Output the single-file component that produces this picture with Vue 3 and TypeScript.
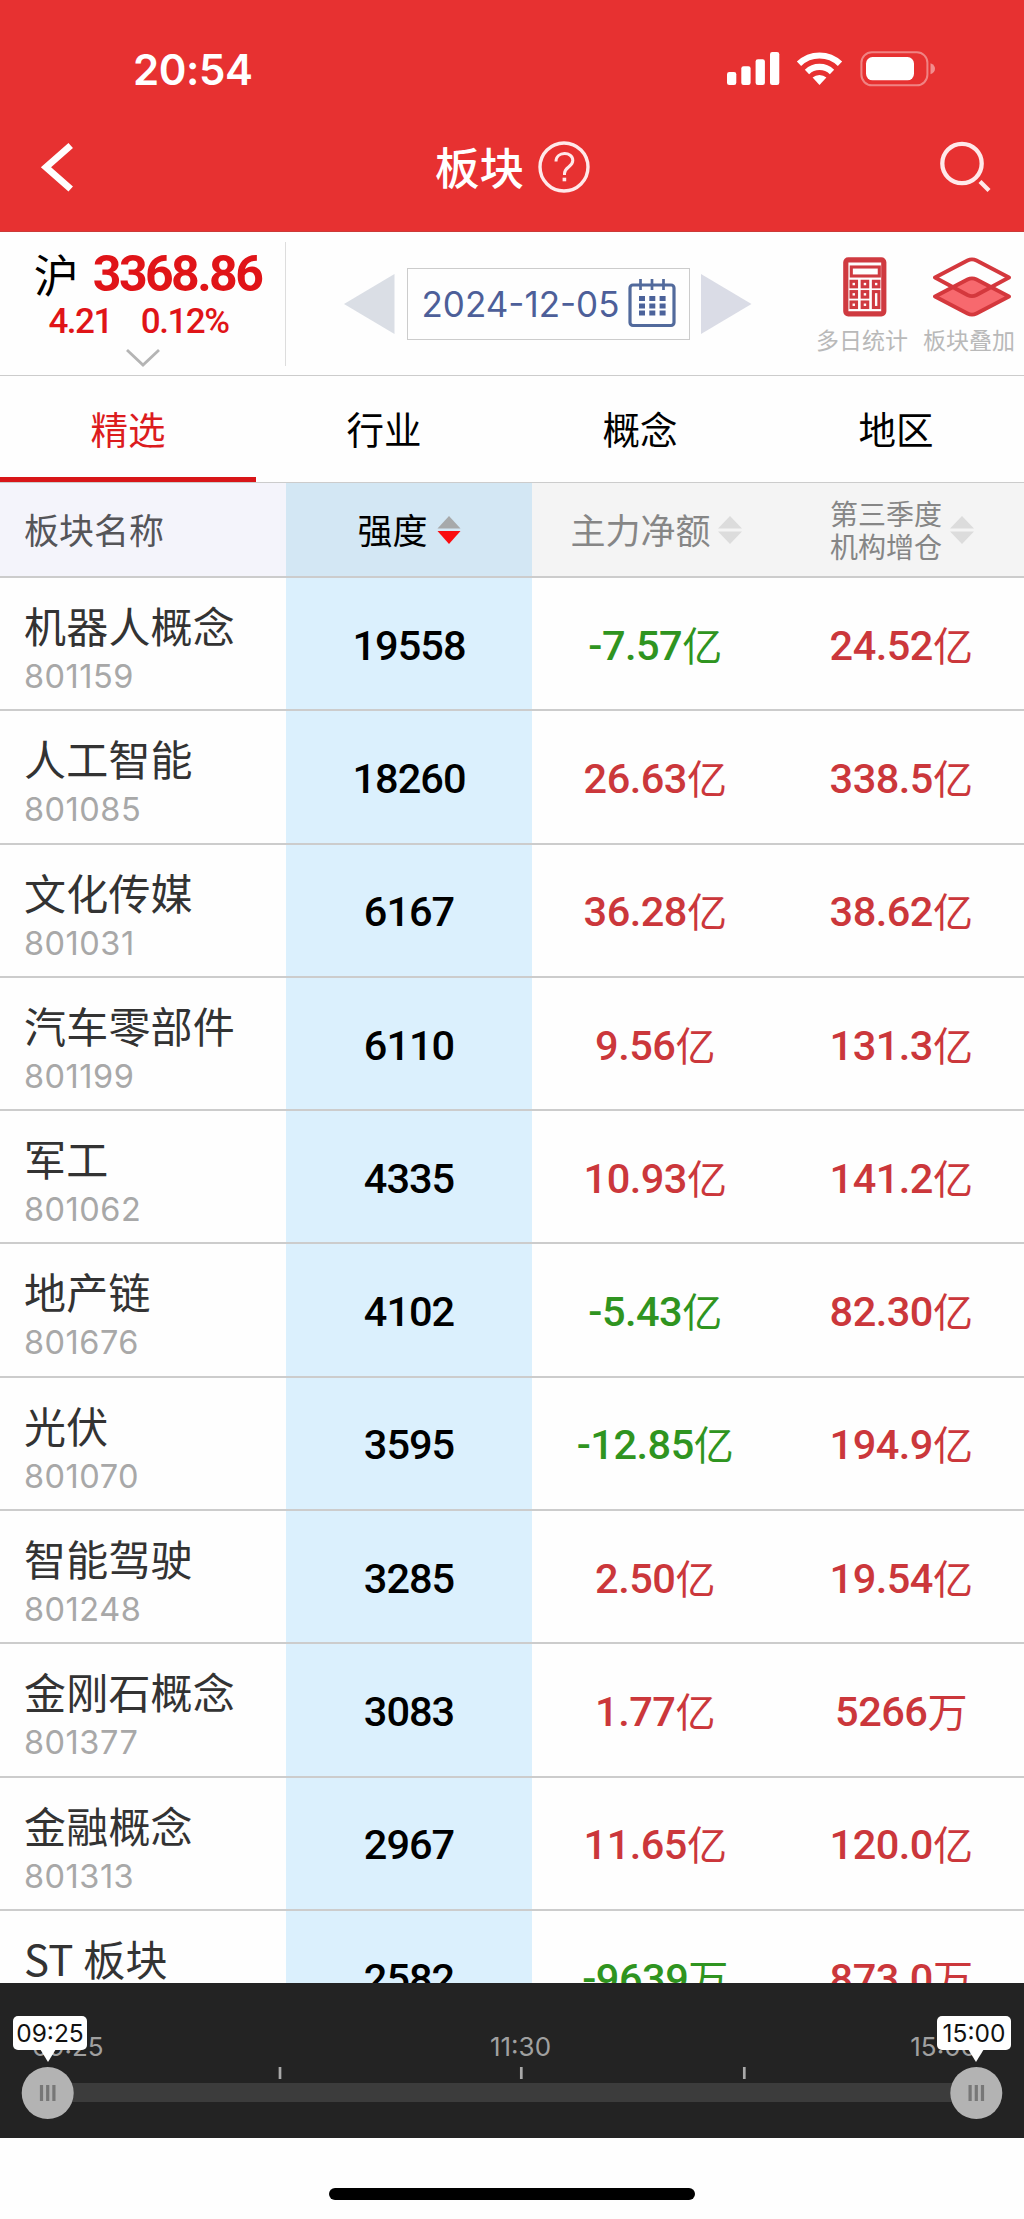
<script setup lang="ts">
interface Sector {
  name: string
  code: string
  strength: number
  net: string
  added: string
}

const tabs: string[] = ['精选', '行业', '概念', '地区']

const sectors: Sector[] = [
  { name: '机器人概念', code: '801159', strength: 19558, net: '-7.57亿', added: '24.52亿' },
  { name: '人工智能', code: '801085', strength: 18260, net: '26.63亿', added: '338.5亿' },
  { name: '文化传媒', code: '801031', strength: 6167, net: '36.28亿', added: '38.62亿' },
  { name: '汽车零部件', code: '801199', strength: 6110, net: '9.56亿', added: '131.3亿' },
  { name: '军工', code: '801062', strength: 4335, net: '10.93亿', added: '141.2亿' },
  { name: '地产链', code: '801676', strength: 4102, net: '-5.43亿', added: '82.30亿' },
  { name: '光伏', code: '801070', strength: 3595, net: '-12.85亿', added: '194.9亿' },
  { name: '智能驾驶', code: '801248', strength: 3285, net: '2.50亿', added: '19.54亿' },
  { name: '金刚石概念', code: '801377', strength: 3083, net: '1.77亿', added: '5266万' },
  { name: '金融概念', code: '801313', strength: 2967, net: '11.65亿', added: '120.0亿' },
  { name: 'ST 板块', code: '', strength: 2582, net: '-9639万', added: '873.0万' },
]

const amount = (v: string): string => v.slice(0, -1)
const unit = (v: string): string => v.slice(-1)
const tone = (v: string): string => (v.startsWith('-') ? 'down' : 'up')
</script>

<template>
  <div class="screen">
    <header class="top">
      <div class="status">
        <span class="clock">20:54</span>
        <svg class="status-icons" width="210" height="38" viewBox="726 50 210 38">
          <g fill="#fff">
            <rect x="727" y="72" width="9.3" height="13" rx="2.3" />
            <rect x="741.3" y="66.3" width="9.3" height="18.7" rx="2.3" />
            <rect x="755.6" y="59.3" width="9.3" height="25.7" rx="2.3" />
            <rect x="770" y="52" width="9.3" height="33" rx="2.3" />
            <path d="M819.5 85 L812.6 77.6 A10.3 10.3 0 0 1 826.4 77.6 Z" />
          </g>
          <g fill="none" stroke="#fff" stroke-width="6.2">
            <path d="M799 63.8 A29.5 29.5 0 0 1 840 63.8" />
            <path d="M807 72 A18 18 0 0 1 832 72" />
          </g>
          <rect x="861.4" y="52.3" width="66" height="33" rx="10.5" fill="none" stroke="#fff" stroke-opacity=".4" stroke-width="2" />
          <rect x="866" y="57" width="48" height="23.3" rx="6.5" fill="#fff" />
          <path d="M930.5 63.2 Q935 65 935 68.7 Q935 72.5 930.5 74.3 Z" fill="#fff" fill-opacity=".45" />
        </svg>
      </div>
      <nav class="nav">
        <svg class="back" width="36" height="54" viewBox="37 140 36 54">
          <path d="M69.7 145.5 L45 167.200 L69.700 189" fill="none" stroke="#fff" stroke-width="6.800" />
        </svg>
        <div class="title">
          <span>板块</span>
          <svg width="54" height="54" viewBox="0 0 54 54" fill="none" stroke="#ffe9ea">
            <circle cx="27" cy="27" r="24" stroke-width="3.400" />
            <path d="M19 21.500 C19 11 35.800 11 35.800 20.500 C35.800 27 27.500 27 27.500 33.500 V35" stroke-width="3" />
            <path d="M25.600 39.500 h3.600" stroke-width="3.600" />
          </svg>
        </div>
        <svg class="search" width="54" height="54" viewBox="936 140 54 54" fill="none" stroke="#ffe9ea" stroke-width="4.300">
          <circle cx="961" cy="163.500" r="19.700" />
          <path d="M979 181.500 L988 190.500" />
        </svg>
      </nav>
    </header>

    <section class="overview">
      <div class="index">
        <div class="index-main"><span class="market">沪</span><b>3368.86</b></div>
        <div class="index-sub"><span>4.21</span><span>0.12%</span></div>
        <svg width="36" height="20" viewBox="0 0 36 20">
          <path d="M2 2 L18 17 L34 2" fill="none" stroke="#b4b4b4" stroke-width="2.800" />
        </svg>
      </div>
      <div class="picker">
        <svg width="51" height="60" viewBox="0 0 51 60"><path d="M0 30 L50.500 0 V60 Z" fill="#dadee5" /></svg>
        <div class="date">
          <span>2024-12-05</span>
          <svg width="48" height="50" viewBox="0 0 48 50">
            <rect x="2" y="7" width="44" height="40.500" rx="3" fill="none" stroke="#526a9c" stroke-width="3.200" />
            <path d="M12.500 1 V12 M24 1 V12 M35.500 1 V12" stroke="#526a9c" stroke-width="2.700" />
            <path d="M11 20.500 h6 m4.300 0 h6 m4.300 0 h6 M11 28 h6 m4.300 0 h6 m4.300 0 h6 M11 35 h6 m4.300 0 h6 m4.300 0 h6" stroke="#4b629a" stroke-width="4.800" />
          </svg>
        </div>
        <svg width="51" height="60" viewBox="0 0 51 60"><path d="M50.500 30 L0 0 V60 Z" fill="#dadce6" /></svg>
      </div>
      <div class="tools">
        <div class="tool">
          <svg width="44" height="60" viewBox="0 0 44 60" fill="none" stroke="#cf3a40">
            <rect x="2.800" y="2.800" width="38" height="54" rx="2.500" stroke-width="5.200" />
            <g stroke-width="3.100">
              <rect x="8.300" y="10" width="28" height="9" />
              <rect x="8" y="24.300" width="5.500" height="5.500" /><rect x="19.200" y="24.300" width="5.500" height="5.500" /><rect x="30.400" y="24.300" width="5.500" height="5.500" />
              <rect x="8" y="34.600" width="5.500" height="5.500" /><rect x="19.200" y="34.600" width="5.500" height="5.500" />
              <rect x="8" y="45" width="5.500" height="5.500" /><rect x="19.200" y="45" width="5.500" height="5.500" />
              <rect x="30.400" y="34.600" width="5.500" height="15.900" />
            </g>
          </svg>
          <span>多日统计</span>
        </div>
        <div class="tool layers">
          <svg width="80" height="60" viewBox="0 0 80 60" stroke="#d4383d" stroke-width="3.900" stroke-linejoin="round">
            <path d="M3 39.500 L35.500 22.500 Q40 20.200 44.500 22.500 L77 39.500 L44.500 56.500 Q40 58.800 35.500 56.500 Z" fill="#f7696e" />
            <path d="M3 20.500 L35.500 3.500 Q40 1.200 44.500 3.500 L77 20.500 L44.500 38 Q40 40.200 35.500 38 Z" fill="none" />
          </svg>
          <span>板块叠加</span>
        </div>
      </div>
    </section>

    <div class="tabs">
      <div v-for="(t, i) in tabs" :key="t" class="tab" :class="{ active: i === 0 }">{{ t }}</div>
    </div>

    <main class="table">
      <div class="row head">
        <div class="cell name-head"><span>板块名称</span></div>
        <div class="cell hot">
          <span>强度</span>
          <svg width="24" height="28" viewBox="0 0 24 28"><path d="M12 0 L23.500 12.500 H.5 Z" fill="#a7a9aa" /><path d="M12 28 L23.500 15 H.5 Z" fill="#fa0d10" /></svg>
        </div>
        <div class="cell net-head">
          <span>主力净额</span>
          <svg width="24" height="28" viewBox="0 0 24 28" fill="#dcdcdc"><path d="M12 0 L24 12.500 H0 Z M12 28 L24 15.500 H0 Z" /></svg>
        </div>
        <div class="cell add-head">
          <div>第三季度<br />机构增仓</div>
          <svg width="24" height="28" viewBox="0 0 24 28" fill="#dcdcdc"><path d="M12 0 L24 12.500 H0 Z M12 28 L24 15.500 H0 Z" /></svg>
        </div>
      </div>
      <div v-for="s in sectors" :key="s.name" class="row">
        <div class="name"><span class="label">{{ s.name }}</span><span v-if="s.code" class="code">{{ s.code }}</span></div>
        <div class="cell hot num strength">{{ s.strength }}</div>
        <div class="cell num" :class="tone(s.net)">{{ amount(s.net) }}<i>{{ unit(s.net) }}</i></div>
        <div class="cell num" :class="tone(s.added)">{{ amount(s.added) }}<i>{{ unit(s.added) }}</i></div>
      </div>
    </main>

    <section class="timeline">
      <div class="hours"><span>09:25</span><span class="noon">11:30</span><span>15:00</span></div>
      <svg class="rail" width="1024" height="54" viewBox="0 2066 1024 54">
        <path d="M280 2067 v12 M521.300 2067 v12 M744.300 2067 v12" stroke="#a9a9a9" stroke-width="2.700" />
        <rect x="48" y="2083" width="928" height="19" fill="#3c3c3c" />
        <g v-for="cx in [47.7, 976.3]" :key="cx">
          <circle :cx="cx" cy="2093" r="26" fill="#b3b3b3" />
          <path :d="`M${cx - 6.2} 2085 v16 M${cx} 2085 v16 M${cx + 6.2} 2085 v16`" stroke="#777" stroke-width="3.200" />
        </g>
      </svg>
      <div class="bubble start">09:25</div>
      <div class="bubble end">15:00</div>
    </section>

    <footer class="home"><div class="home-bar"></div></footer>
  </div>
</template>

<style>
body {
  background: #fff;
}
</style>

<style scoped>
.screen {
  width: 1024px;
  height: 2219px;
  overflow: hidden;
  display: flex;
  flex-direction: column;
  background: #fefefe;
  font-family: 'Noto Sans CJK SC', sans-serif;
  color: #000;
}
.screen * {
  box-sizing: border-box;
}
svg {
  display: block;
  flex: none;
}
.top {
  height: 232px;
  flex: none;
  background: #e73131;
  color: #fff;
  border-bottom: 1px solid #cc3a38;
}
.status {
  height: 104px;
  padding: 50px 88px 0 133px;
  display: flex;
  justify-content: space-between;
  align-items: flex-start;
}
.clock {
  font: 600 42px/40px Inter, sans-serif;
  letter-spacing: -0.4px;
  white-space: nowrap;
}
.nav {
  height: 126px;
  padding: 0 33px 0 38px;
  display: flex;
  justify-content: space-between;
  align-items: center;
}
.title {
  display: flex;
  align-items: center;
  gap: 13px;
  font-size: 44.5px;
  font-weight: 500;
  line-height: 60px;
  margin-left: 15px;
}
.title span {
  margin-top: -3px;
}
.overview {
  height: 144px;
  flex: none;
  display: flex;
  border-bottom: 1px solid #ccc;
}
.index {
  width: 286px;
  height: 124px;
  margin-top: 10px;
  border-right: 1px solid #ddd;
  display: flex;
  flex-direction: column;
  align-items: center;
  color: #e01418;
}
.index-main {
  height: 64px;
  display: flex;
  align-items: center;
  padding-left: 10px;
  line-height: 64px;
}
.market {
  color: #000;
  font-size: 45px;
  margin-right: 14px;
}
.index-main b {
  font: 700 50px/66px Roboto, sans-serif;
  letter-spacing: -2.6px;
}
.index-sub {
  height: 42px;
  margin-top: -5px;
  display: flex;
  gap: 29px;
  padding-right: 8px;
  font: 500 35px/42px Roboto, sans-serif;
  letter-spacing: -1.5px;
}
.index svg {
  margin-top: 5px;
}
.picker {
  width: 408px;
  margin-left: 58px;
  display: flex;
  align-items: center;
  justify-content: space-between;
}
.date {
  width: 283px;
  height: 72px;
  border: 1px solid #ccc;
  display: flex;
  align-items: center;
  padding: 0 13px 0 14px;
  justify-content: space-between;
  font: 400 35px/60px Inter, sans-serif;
  letter-spacing: 0;
  color: #4d5f99;
}
.date svg {
  margin-top: -2px;
}
.tools {
  display: flex;
  margin-left: 64px;
  padding-top: 25px;
  gap: 15px;
}
.tool {
  width: 92px;
  display: flex;
  flex-direction: column;
  align-items: center;
  font-size: 23px;
  line-height: 34px;
  color: #b9b9b9;
  white-space: nowrap;
}
.tool svg {
  margin-left: 6px;
}
.tool span {
  margin-top: 5px;
}
.tabs {
  height: 107px;
  flex: none;
  display: flex;
  border-bottom: 1px solid #ccc;
}
.tab {
  flex: 1;
  text-align: center;
  font-size: 37.5px;
  line-height: 103px;
}
.tab.active {
  color: #dc1c1e;
  border-bottom: 5px solid #d81518;
}
.table {
  height: 1500px;
  flex: none;
  overflow: hidden;
}
.row {
  display: grid;
  grid-template-columns: 286px 246px 246px 246px;
  height: 133.3px;
  border-bottom: 2px solid #ccc;
}
.head {
  height: 95px;
  background: #f4f4f4;
  font-size: 35px;
}
.head span {
  margin-top: -3px;
}
.cell {
  display: flex;
  align-items: center;
  justify-content: center;
  white-space: nowrap;
}
.hot {
  background: #dbf0fd;
}
.head .hot {
  background: #d3e7f4;
  gap: 9px;
}
.name-head {
  justify-content: flex-start;
  padding-left: 24px;
  background: #f4f4fb;
  color: #555559;
}
.net-head {
  gap: 7px;
  padding-left: 2px;
  color: #868686;
}
.add-head {
  gap: 8px;
  padding-left: 2px;
  font-size: 28px;
  line-height: 33px;
  color: #868686;
}
.name {
  padding: 17px 0 0 24px;
  display: flex;
  flex-direction: column;
  color: #333;
}
.label {
  font-size: 42px;
  line-height: 60px;
  letter-spacing: 0.2px;
  white-space: nowrap;
}
.code {
  margin-top: 4px;
  font: 400 32.5px/36px Inter, sans-serif;
  letter-spacing: 0.5px;
  color: #a8a8a8;
}
.num {
  font: 500 41.5px/60px Roboto, 'Noto Sans CJK SC', sans-serif;
  letter-spacing: -0.5px;
  padding-top: 4px;
}
.strength {
  letter-spacing: -1px;
}
.num i {
  font: 400 40px/60px 'Noto Sans CJK SC', sans-serif;
  margin-top: -4px;
}
.up {
  color: #cb373b;
}
.down {
  color: #2f9420;
}
.timeline {
  position: relative;
  height: 155px;
  flex: none;
  background: #232323;
}
.hours {
  height: 83px;
  padding: 49px 47px 0 32px;
  display: flex;
  justify-content: space-between;
  font: 400 26px/30px Inter, sans-serif;
  color: #a0a0a0;
}
.noon {
  margin-left: 27px;
}
.bubble {
  position: absolute;
  top: 33px;
  width: 74px;
  height: 34px;
  border-radius: 5px;
  background: #fff;
  color: #111;
  text-align: center;
  font: 400 24.5px/35px Inter, sans-serif;
}
.bubble::after {
  content: '';
  position: absolute;
  top: 33px;
  border: 8px solid transparent;
  border-top: 13px solid #fff;
  border-bottom: 0;
}
.start {
  left: 13px;
}
.start::after {
  left: 27px;
}
.end {
  left: 937px;
}
.end::after {
  left: 31px;
}
.home {
  flex: 1;
  display: flex;
  justify-content: center;
  padding-top: 50px;
}
.home-bar {
  width: 366px;
  height: 12px;
  border-radius: 6px;
  background: #000;
}
</style>
